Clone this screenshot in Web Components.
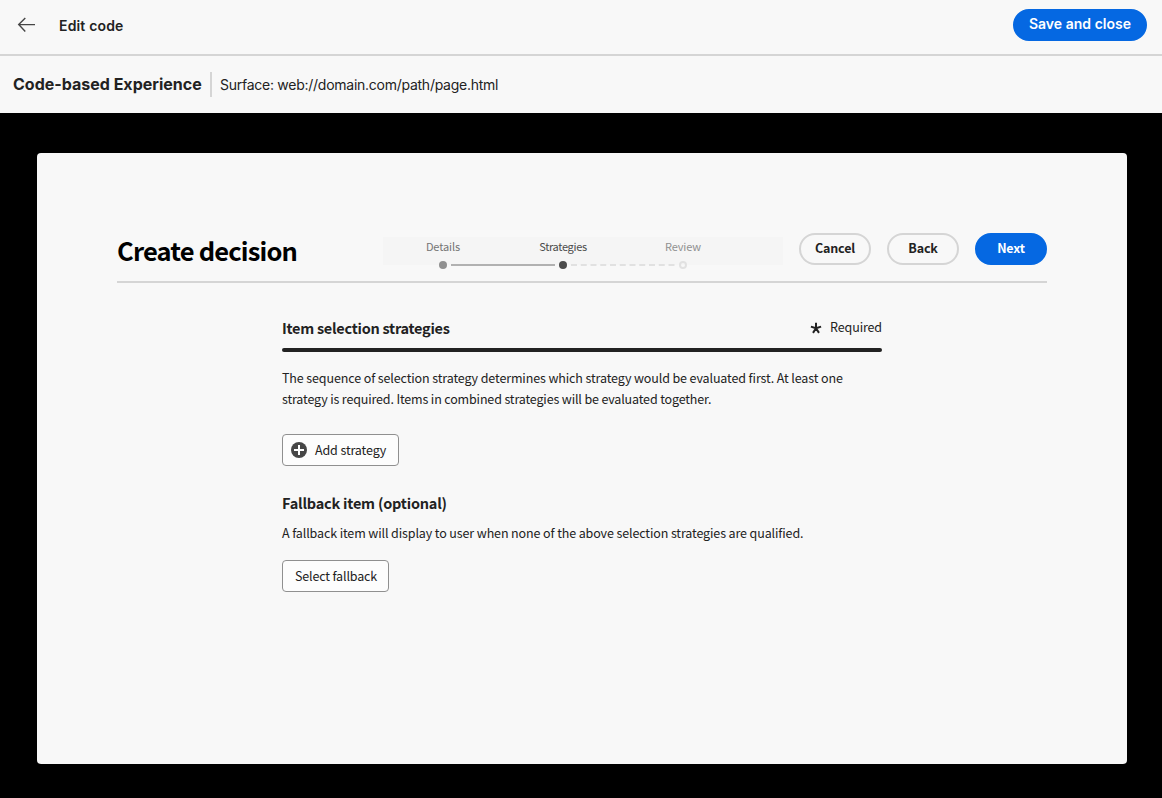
<!DOCTYPE html>
<html lang="en">
<head>
<meta charset="utf-8">
<title>Edit code</title>
<style>
html,body{margin:0;height:100%;background:#000}
body{font-family:Inter,"Liberation Sans",sans-serif;color:#222}
</style>
</head>
<body>
<edit-page></edit-page>
<script>
const make = (name, html) => {
  const t = document.createElement('template');
  t.innerHTML = html;
  customElements.define(name, class extends HTMLElement {
    constructor() {
      super();
      this.attachShadow({ mode: 'open' }).append(t.content.cloneNode(true));
    }
  });
};

make('pill-button', `
<style>
:host{display:flex;box-sizing:border-box;align-items:center;justify-content:center;height:32px;width:72px;padding-bottom:2px;border:2px solid #d5d5d5;border-radius:16px;font-weight:700;white-space:nowrap;color:#222;cursor:pointer}
:host([accent]){background:#0568e2;border-color:#0568e2;color:#fff}
</style><slot></slot>`);

make('box-button', `
<style>
:host{display:flex;box-sizing:border-box;align-items:center;height:32px;border:1px solid #909090;border-radius:4px;background:#fdfdfd;font-size:12.5px;line-height:20px;color:#222;white-space:nowrap;cursor:pointer}
</style><slot name="icon"></slot><slot></slot>`);

make('top-bar', `
<style>
:host{display:flex;box-sizing:border-box;height:56px;border-bottom:2px solid #d5d5d5;background:#f8f8f8;padding:9px 15px 0 17px;align-items:flex-start}
svg{display:block;margin-top:8px}
.t{margin:6px auto 0 23px;font-weight:600;font-size:14px;line-height:22px;letter-spacing:.16px}
pill-button{width:134px;font-size:14px;font-weight:600;padding-bottom:3px;letter-spacing:.02px}
</style>
<svg width="19" height="16" viewBox="0 0 19 16" fill="none" stroke="#464646" stroke-width="1.4"><path d="M18 7.6H1.8M8.3 1L1.7 7.6l6.6 6.9"/></svg>
<div class="t">Edit code</div>
<pill-button accent>Save and close</pill-button>`);

make('surface-bar', `
<style>
:host{display:flex;box-sizing:border-box;height:57px;background:#f8f8f8;padding:16px 13px 0;align-items:flex-start}
.n{font-size:16px;font-weight:700;line-height:24px;width:189px;white-space:nowrap}
i{width:2px;height:25px;background:#d5d5d5;margin:0 8px}
.s{font-size:14px;line-height:26px;letter-spacing:-.26px}
</style>
<div class="n">Code-based Experience</div><i></i><div class="s">Surface: web://domain.com/path/page.html</div>`);

make('step-list', `
<style>
:host{display:block;width:400px;height:28px;background:#f5f5f5;font-size:11px;line-height:20px;letter-spacing:-.1px}
.l{display:grid;grid-template-columns:repeat(3,120px);text-align:center;color:#747474;height:23px}
.l div{height:20px;margin-top:-1px}
.c{color:#4b4b4b;letter-spacing:-.33px}.r{color:#909090}
svg{display:block;overflow:visible}
</style>
<div class="l"><div>Details</div><div class="c">Strategies</div><div class="r">Review</div></div>
<svg width="400" height="10"><circle cx="60" cy="5" r="4" fill="#909090"/><path d="M68 5H172" stroke="#b1b1b1" stroke-width="2"/><circle cx="180" cy="5" r="4" fill="#4b4b4b"/><path d="M188 5H292" stroke="#e1e1e1" stroke-width="2" stroke-dasharray="6 3.75"/><circle cx="300" cy="5" r="3" fill="none" stroke="#e1e1e1" stroke-width="2"/></svg>`);

make('decision-header', `
<style>
:host{display:flex;box-sizing:border-box;height:50px;border-bottom:2px solid #d5d5d5;align-items:flex-start}
h1{margin:0;font-size:25.5px;line-height:34px;font-weight:700;color:#000;width:266px;white-space:nowrap;letter-spacing:-.83px}
step-list{margin-top:4px}
nav{display:flex;gap:16px;margin-left:16px;font-size:12.5px;line-height:20px;letter-spacing:-.16px}
</style>
<h1>Create decision</h1><step-list></step-list>
<nav><pill-button>Cancel</pill-button><pill-button>Back</pill-button><pill-button accent>Next</pill-button></nav>`);

make('strategy-form', `
<style>
:host{display:flex;flex-direction:column;width:600px;margin:34px 0 0 165px;font-size:12.5px;line-height:21px;align-items:flex-start;letter-spacing:-.12px}
.h{display:flex;align-items:center;align-self:stretch;height:22px}
h2{margin:0;font-size:14.5px;line-height:22px;font-weight:700;white-space:nowrap;letter-spacing:-.21px}
.h h2{flex:1;letter-spacing:-.27px}
.r{margin:-3px 0 0 8px}
.bar{align-self:stretch;height:4px;border-radius:2px;background:#222;margin:9px 0 15px}
p{margin:0;white-space:nowrap}
.second{letter-spacing:-.15px}
.add{width:117px;padding-left:8px;margin:25px 0 26px}
.sel{width:107px;padding-left:12px;margin-top:17px;letter-spacing:-.16px}
.add svg{margin-right:8px}
</style>
<div class="h"><h2>Item selection strategies</h2>
<svg width="12" height="12" viewBox="0 0 12 12" stroke="#222" stroke-width="2" fill="none"><path d="M6 6.3V.8M6 6.3L.9 4.6M6 6.3l5.1-1.7M6 6.3l-3 4.6M6 6.3l3 4.6"/></svg><div class="r">Required</div></div>
<div class="bar"></div>
<p>The sequence of selection strategy determines which strategy would be evaluated first. At least one</p>
<p class="second">strategy is required. Items in combined strategies will be evaluated together.</p>
<box-button class="add"><svg slot="icon" width="16" height="16"><circle cx="8" cy="8" r="8" fill="#464646"/><path d="M8 3v10M3 8h10" stroke="#fff" stroke-width="2"/></svg>Add strategy</box-button>
<h2>Fallback item (optional)</h2>
<p style="margin-top:8px">A fallback item will display to user when none of the above selection strategies are qualified.</p>
<box-button class="sel">Select fallback</box-button>`);

make('edit-page', `
<style>
:host{display:block;width:1162px;height:798px;background:#000;overflow:hidden}
main{box-sizing:border-box;width:1090px;height:611px;margin:40px 0 0 37px;border-radius:4px;background:#f8f8f8;padding:80px;font-family:"Noto Sans CJK SC","Noto Sans",sans-serif}
</style>
<top-bar></top-bar><surface-bar></surface-bar>
<main><decision-header></decision-header><strategy-form></strategy-form></main>`);
</script>
</body>
</html>
